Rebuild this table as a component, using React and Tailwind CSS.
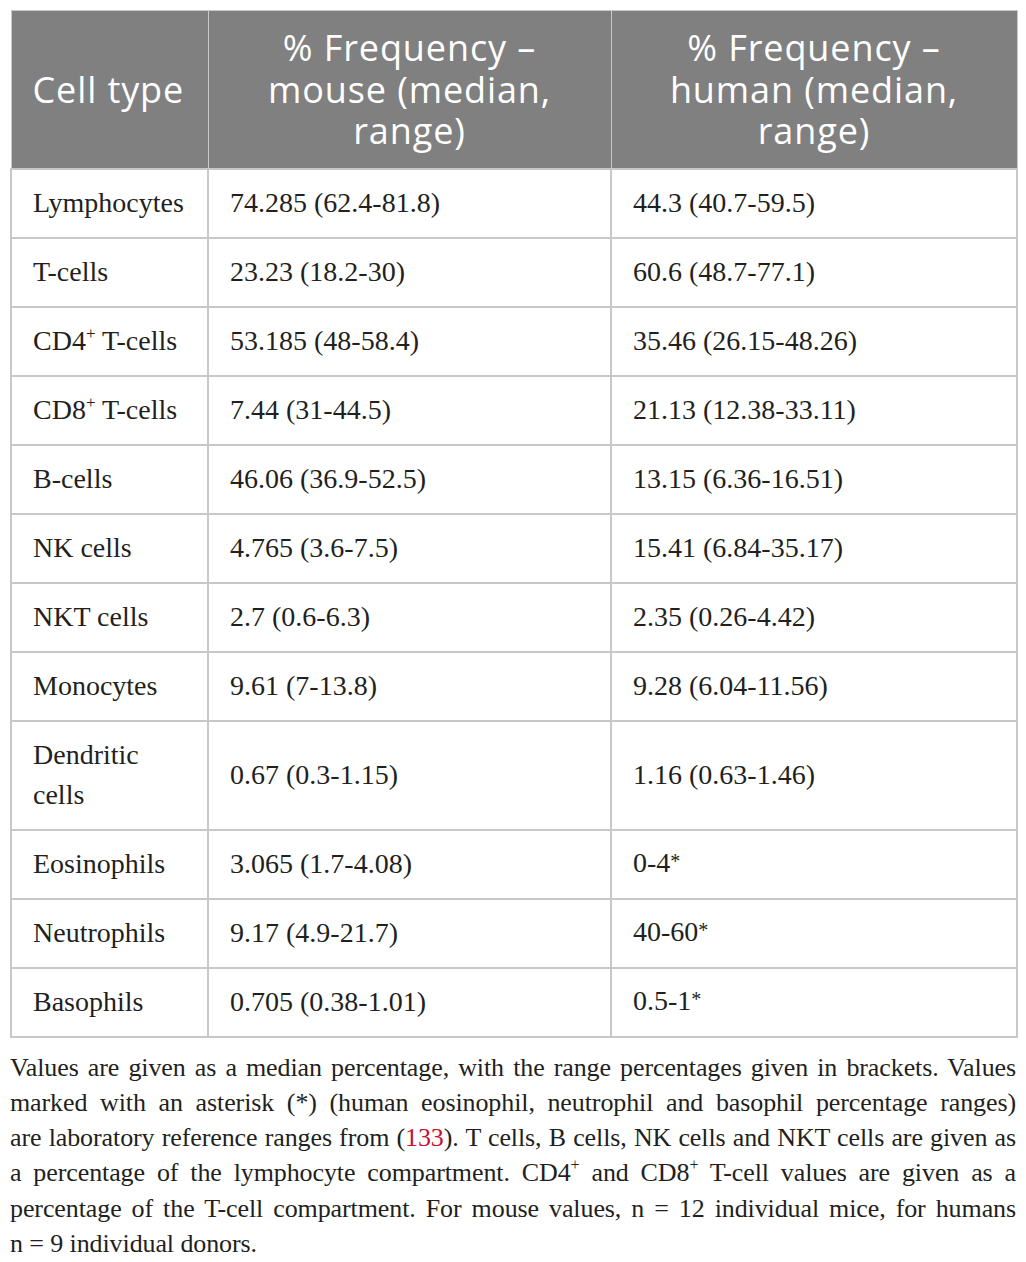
export default function App() {
  const Sup = ({ s = "text-[17px]" }) => <sup className={`${s} relative -top-[11px]`}>+</sup>;
  const Star = () => <span className="text-[20px] relative -top-[4px]">*</span>;
  const rows = [
    ["Lymphocytes", "74.285 (62.4-81.8)", "44.3 (40.7-59.5)"],
    ["T-cells", "23.23 (18.2-30)", "60.6 (48.7-77.1)"],
    [<>CD4<Sup /> T-cells</>, "53.185 (48-58.4)", "35.46 (26.15-48.26)"],
    [<>CD8<Sup /> T-cells</>, "7.44 (31-44.5)", "21.13 (12.38-33.11)"],
    ["B-cells", "46.06 (36.9-52.5)", "13.15 (6.36-16.51)"],
    ["NK cells", "4.765 (3.6-7.5)", "15.41 (6.84-35.17)"],
    ["NKT cells", "2.7 (0.6-6.3)", "2.35 (0.26-4.42)"],
    ["Monocytes", "9.61 (7-13.8)", "9.28 (6.04-11.56)"],
    [<>Dendritic<br />cells</>, "0.67 (0.3-1.15)", "1.16 (0.63-1.46)"],
    ["Eosinophils", "3.065 (1.7-4.08)", <>0-4<Star /></>],
    ["Neutrophils", "9.17 (4.9-21.7)", <>40-60<Star /></>],
    ["Basophils", "0.705 (0.38-1.01)", <>0.5-1<Star /></>],
  ];
  const serif = { fontFamily: '"Liberation Serif", "Times New Roman", serif' };
  const lines = [
    <>Values are given as a median percentage, with the range percentages given in brackets. Values</>,
    <>marked with an asterisk (*) (human eosinophil, neutrophil and basophil percentage ranges)</>,
    <>are laboratory reference ranges from (<span className="text-[#c8102e]">133</span>). T cells, B cells, NK cells and NKT cells are given as</>,
    <>a percentage of the lymphocyte compartment. CD4<Sup s="text-[16px]" /> and CD8<Sup s="text-[16px]" /> T-cell values are given as a</>,
    <>percentage of the T-cell compartment. For mouse values, n = 12 individual mice, for humans</>,
  ];
  return (
    <div className="bg-white w-[1026px] min-h-[1262px] pt-[10px] px-[10px]">
      <table className="w-[1006px] border-collapse border border-[#c8c8c8] table-fixed">
        <colgroup>
          <col className="w-[197px]" />
          <col className="w-[403px]" />
          <col className="w-[406px]" />
        </colgroup>
        <thead>
          <tr className="bg-[#7f807f] text-white text-[36px] tracking-[0.9px] leading-[41.5px] h-[158px]" style={{ fontFamily: '"Open Sans", sans-serif' }}>
            <th className="font-normal text-left pl-[21px] align-middle border border-[#c8c8c8]">Cell type</th>
            <th className="font-normal text-center align-middle border border-[#c8c8c8] px-[20px]">% Frequency –<br />mouse (median,<br />range)</th>
            <th className="font-normal text-center align-middle border border-[#c8c8c8] px-[20px]">% Frequency –<br />human (median,<br />range)</th>
          </tr>
        </thead>
        <tbody className="text-[#231f20] text-[28px] leading-[40px]" style={serif}>
          {rows.map((r, i) => (
            <tr key={i} className={i === 8 ? "h-[109px]" : "h-[69px]"}>
              <td className="border-2 border-[#c8c8c8] pl-[21px] align-middle whitespace-nowrap">{r[0]}</td>
              <td className="border-2 border-[#c8c8c8] pl-[21px] align-middle">{r[1]}</td>
              <td className="border-2 border-[#c8c8c8] pl-[21px] align-middle">{r[2]}</td>
            </tr>
          ))}
        </tbody>
      </table>
      <div className="mt-[12px] w-[1006px] text-[26px] tracking-[-0.1px] leading-[35.3px] text-[#231f20]" style={serif}>
        {lines.map((l, i) => (
          <div key={i} className="text-justify [text-align-last:justify] whitespace-nowrap">{l}</div>
        ))}
        <div>n = 9 individual donors.</div>
      </div>
    </div>
  );
}
